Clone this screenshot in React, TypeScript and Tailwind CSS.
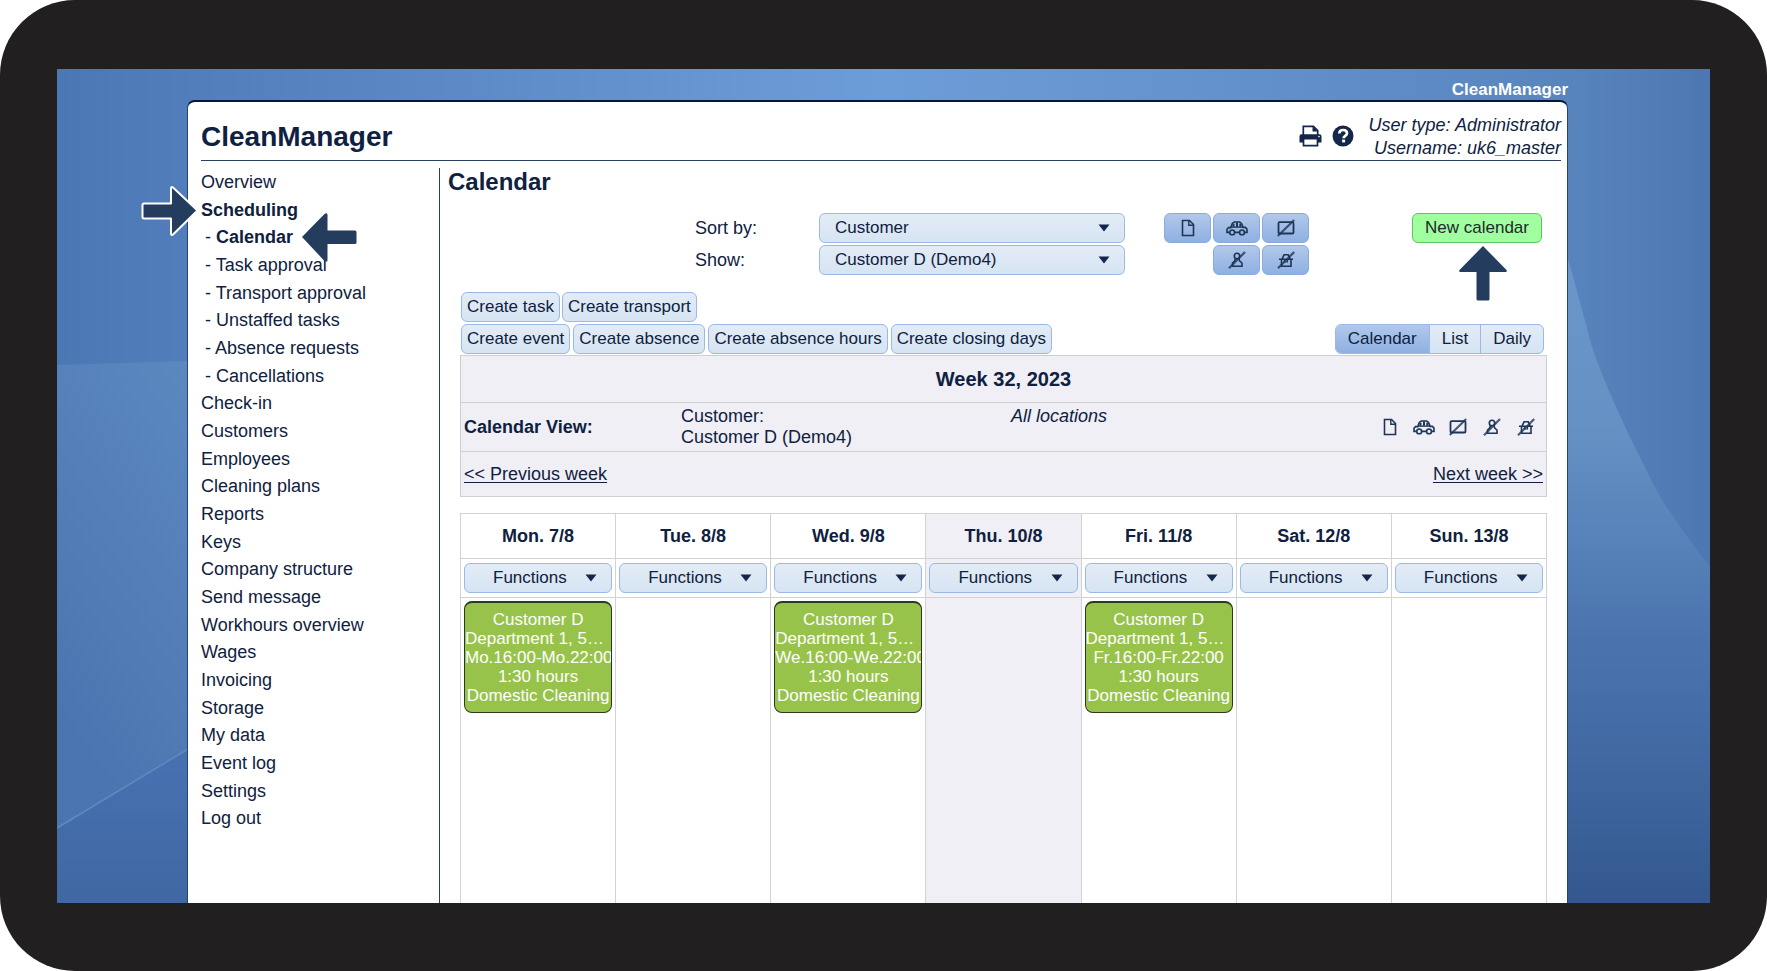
import { ReactNode } from "react";
import clsx from "clsx";

const menu = [
    { label: "Overview" },
    { label: "Scheduling", active: true, arrow: "right" },
    { label: "Calendar", sub: true, active: true, arrow: "left" },
    { label: "Task approval", sub: true },
    { label: "Transport approval", sub: true },
    { label: "Unstaffed tasks", sub: true },
    { label: "Absence requests", sub: true },
    { label: "Cancellations", sub: true },
    { label: "Check-in" },
    { label: "Customers" },
    { label: "Employees" },
    { label: "Cleaning plans" },
    { label: "Reports" },
    { label: "Keys" },
    { label: "Company structure" },
    { label: "Send message" },
    { label: "Workhours overview" },
    { label: "Wages" },
    { label: "Invoicing" },
    { label: "Storage" },
    { label: "My data" },
    { label: "Event log" },
    { label: "Settings" },
    { label: "Log out" },
];

const days = [
    { name: "Mon. 7/8", time: "Mo.16:00-Mo.22:00" },
    { name: "Tue. 8/8" },
    { name: "Wed. 9/8", time: "We.16:00-We.22:00" },
    { name: "Thu. 10/8", today: true },
    { name: "Fri. 11/8", time: "Fr.16:00-Fr.22:00" },
    { name: "Sat. 12/8" },
    { name: "Sun. 13/8" },
];

/* ---------- icons ---------- */

function Icon({ children }: { children: ReactNode }) {
    return (
        <svg viewBox="0 0 22 22" className="w-[22px] h-[22px] shrink-0" fill="none" stroke="#1f3557" strokeWidth="1.6" aria-hidden="true">
            {children}
        </svg>
    )
}

const PageIcon = () => (
    <Icon>
        <path d="M5.5 3.5h7l4 4v11h-11z" />
        <path d="M11.8 3.5v4.7h4.7" strokeWidth="1.4" />
    </Icon>
)

const CarIcon = () => (
    <Icon>
        <path d="M3.6 15.4H1v-3l1.5-1.8h2.2l1.6-4.2 2-1.4h5.4l1.8 1.4 1.7 4h2.2l1.6 1.7v3.300h-2.500M8.700 15.400h4.800" />
        <path d="M5 10.100h12" strokeWidth="1.4" />
        <path d="M7.500 6.800v3M11 5.500v4.300M14.300 6.800v3" strokeWidth="2" />
        <circle cx="6.2" cy="15.4" r="2.4" />
        <circle cx="16" cy="15.4" r="2.4" />
    </Icon>
)

const NoTaskIcon = () => (
    <Icon>
        <rect x="3.5" y="5.200" width="15" height="11.300" rx="1" strokeWidth="1.8" />
        <path d="M2.800 19 19.200 3" strokeWidth="2.2" strokeOpacity="0.8" />
    </Icon>
)

const NoPersonIcon = () => (
    <Icon>
        <circle cx="11" cy="7" r="2.700" />
        <path d="M9.500 9.600 8.600 12 6.500 14v3.200h9.500V14l-2.300-2-0.800-2.400" />
        <path d="M3 19.200 19 3" strokeWidth="2.200" strokeOpacity="0.8" />
    </Icon>
)

const NoPlaceIcon = () => (
    <Icon>
        <path d="M4 10.200h14M6.500 10.200v7h9.500v-7M7.200 9.800l1.800-4h4.200l1.900 4" />
        <path d="M9.500 10.500v2.500h3v-2.500" strokeWidth="1.2" />
        <path d="M3 19.200 19.200 3" strokeWidth="2.2" strokeOpacity="0.8" />
    </Icon>
)

const PrintIcon = () => (
    <svg viewBox="0 0 23 22" className="w-[23px] h-[22px]" fill="none" aria-hidden="true">
        <path d="M4.3 10V1.400h10.200l4.200 4.200V10" stroke="#14274a" strokeWidth="1.7" />
        <path d="M13.500 1v5.600h5.500z" fill="#14274a" />
        <path d="M2.5 9.3h18a2 2 0 0 1 2 2V17.500h-4v-3h-14v3h-4V11.300a2 2 0 0 1 2-2z" fill="#14274a" />
        <circle cx="20" cy="11.6" r="0.8" fill="#fff" />
        <path d="M4.500 14v6.600h14V14" stroke="#14274a" strokeWidth="1.7" />
    </svg>
)

const HelpIcon = () => (
    <svg viewBox="0 0 22 22" className="w-[22px] h-[22px]" fill="none" aria-hidden="true">
        <circle cx="11" cy="11" r="10.5" fill="#14274a" />
        <path d="M7.300 8.500c0-2.300 1.600-3.500 3.800-3.500s3.900 1.200 3.900 3.200c0 2.600-3.400 2.700-3.400 5" stroke="#fff" strokeWidth="2.7" />
        <path d="M10.100 14.600h3v2.800h-3z" fill="#fff" />
    </svg>
)

/* thick pointer arrows used by the guide */
function GuideArrow({ dir }: { dir: string }) {
    if (dir === "right")
        return (
            <svg viewBox="0 0 58 52" className="absolute z-10 -left-[60px] -top-[11px] w-[58px] h-[52px]" aria-hidden="true">
                <path d="M3 18.500h27V4q0-3 2-1.500L56.500 25.500 32 49.500q-2 1.500-2-1.500V33.500H3q-1.500 0-1.500-1.500V20q0-1.500 1.500-1.500z" fill="#243d5f" stroke="#fff" strokeWidth="2" strokeLinejoin="round" />
            </svg>
        )
    if (dir === "left")
        return (
            <svg viewBox="0 0 55 52" className="absolute z-10 left-[101px] -top-[12px] w-[55px] h-[52px]" aria-hidden="true">
                <path d="M0 26 22.500 3q3-2 3 1v15.500H53q1.500 0 1.500 1.500v10.500q0 1.500-1.500 1.500H25.500V49q0 3-3 1z" fill="#243d5f" />
            </svg>
        )
    return (
        <svg viewBox="0 0 48 55" className="absolute z-10 right-[40px] top-[33px] w-[48px] h-[55px]" aria-hidden="true">
            <path d="M24 0 47.500 24q1 2-1 2H30.500v27q0 1.500-1.500 1.500H19q-1.500 0-1.500-1.500V26h-16q-2 0-1-2z" fill="#243d5f" />
        </svg>
    )
}

/* ---------- controls ---------- */

function Select({ id, options, className, label }: { id: string, options: string[], className: string, label?: string }) {
    return (
        <div className="relative w-full">
            <select
                id={id}
                aria-label={label}
                className={clsx("block w-full h-[30px] appearance-none rounded-md border border-[#9bb9e6] bg-linear-to-b from-[#e3ecf6] to-[#d6e4f3] text-[17px] leading-5", className)}
            >
                {options.map((o) => <option key={o}>{o}</option>)}
            </select>
            <svg viewBox="0 0 12 8" className="absolute right-[15px] top-[11px] w-[12px] h-[8px] pointer-events-none" aria-hidden="true">
                <path d="M0.500 0.500h11L6 7.500z" fill="#14274a" />
            </svg>
        </div>
    )
}

function Button({ children }: { children: ReactNode }) {
    return (
        <button className="h-[30px] px-[5px] rounded-md border border-[#9bb9e6] bg-linear-to-b from-[#e3ecf6] to-[#d6e4f3] text-[17px] leading-5 whitespace-nowrap">
            {children}
        </button>
    )
}

function IconButton({ label, children, className }: { label: string, children: ReactNode, className?: string }) {
    return (
        <button
            aria-label={label}
            className={clsx("h-[30px] flex items-center justify-center rounded-md border border-[#8aabe0] bg-linear-to-b from-[#b1c8ea] to-[#8fb0e2]", className)}
        >
            {children}
        </button>
    )
}

function EventCard({ time }: { time: string }) {
    return (
        <div className="rounded-lg border border-t-2 border-[#2b3a1c] bg-[#97c34a] pt-[7px] pb-[7px] text-[17px] leading-[19px] text-white text-center whitespace-nowrap overflow-hidden">
            <p>Customer D</p>
            <p className="text-left">Department 1, 5…</p>
            <p>{time}</p>
            <p>1:30 hours</p>
            <p>Domestic Cleaning</p>
        </div>
    )
}

/* ---------- page parts ---------- */

function Backdrop() {
    return (
        <svg viewBox="0 0 1653 834" preserveAspectRatio="none" className="absolute inset-0 w-full h-full" aria-hidden="true">
            <defs>
                <linearGradient id="sky">
                    <stop offset="0" stopColor="#4c77b5" />
                    <stop offset="0.2" stopColor="#5a87c3" />
                    <stop offset="0.5" stopColor="#6d9dd8" />
                    <stop offset="0.9" stopColor="#5a86c0" />
                    <stop offset="1" stopColor="#4d77b0" />
                </linearGradient>
                <linearGradient id="facet" x1="1" y1="0" x2="0.6" y2="1">
                    <stop offset="0" stopColor="#5c88c0" />
                    <stop offset="1" stopColor="#4b75b0" />
                </linearGradient>
                <linearGradient id="floor" x1="0" y1="0" x2="0" y2="1">
                    <stop offset="0" stopColor="#4771b1" />
                    <stop offset="1" stopColor="#3f68a3" />
                </linearGradient>
                <linearGradient id="wave" x1="0" y1="0" x2="0" y2="1">
                    <stop offset="0" stopColor="#6c97c9" />
                    <stop offset="0.3" stopColor="#6490c4" />
                    <stop offset="0.6" stopColor="#4b74ae" />
                    <stop offset="0.8" stopColor="#4067a0" />
                    <stop offset="1" stopColor="#33588f" />
                </linearGradient>
            </defs>
            <rect width="1653" height="834" fill="url(#sky)" />
            <path d="M0 296 131 292V680L0 759z" fill="url(#facet)" />
            <path d="M0 759 131 680V834H0z" fill="url(#floor)" />
            <path d="M0 759 131 680" stroke="#5f8abf" strokeWidth="1.5" />
            <path d="M1505 170Q1520 220 1534 275 1552 330 1603 428 1625 462 1653 498V834H1505z" fill="url(#wave)" />
        </svg>
    )
}

function Sidebar() {
    return (
        <nav className="w-[239px] shrink-0 mt-[7px] border-r border-[#2c3f60]">
            <ul className="grid auto-rows-fr h-[664px] text-lg leading-7">
                {menu.map((item) => (
                    <li key={item.label} className={clsx("relative", item.sub && "pl-1", item.active && "font-bold")}>
                        {item.sub && <span className="font-normal">- </span>}
                        <a href="#">{item.label}</a>
                        {item.arrow && <GuideArrow dir={item.arrow} />}
                    </li>
                ))}
            </ul>
        </nav>
    )
}

function Filters() {
    return (
        <div className="relative flex items-start mt-[17px] pl-[235px] pr-[5px]">
            <div className="grid grid-cols-[124px_306px] gap-y-[2px] items-center text-lg leading-[30px]">
                <label htmlFor="sort">Sort by:</label>
                <Select id="sort" options={["Customer"]} className="px-[15px]" />
                <label htmlFor="show">Show:</label>
                <Select id="show" options={["Customer D (Demo4)"]} className="px-[15px]" />
            </div>
            <div className="grid grid-cols-[47px_47px_47px] gap-[2px] ml-[39px]">
                <IconButton label="Tasks"><PageIcon /></IconButton>
                <IconButton label="Transport"><CarIcon /></IconButton>
                <IconButton label="Hide absence"><NoTaskIcon /></IconButton>
                <IconButton label="Hide employees" className="col-start-2"><NoPersonIcon /></IconButton>
                <IconButton label="Hide closing days"><NoPlaceIcon /></IconButton>
            </div>
            <button className="ml-auto h-[30px] px-3 rounded-md border border-[#5fc45f] bg-[#a0ff9f] text-[17px] leading-5 text-[#22282c]">
                New calendar
            </button>
            <GuideArrow dir="up" />
        </div>
    )
}

function Actions() {
    return (
        <div className="mt-[17px] pl-px">
            <div className="flex gap-[2px]">
                <Button>Create task</Button>
                <Button>Create transport</Button>
            </div>
            <div className="flex justify-between mt-[2px] pr-[3px]">
                <div className="flex gap-[3px]">
                    <Button>Create event</Button>
                    <Button>Create absence</Button>
                    <Button>Create absence hours</Button>
                    <Button>Create closing days</Button>
                </div>
                <div className="flex h-[30px] rounded-md border border-[#9bb9e6] bg-linear-to-b from-[#e3ecf6] to-[#d6e4f3] text-[17px] leading-5 overflow-hidden">
                    <button className="px-3 bg-linear-to-b from-[#b1c8ea] to-[#8fb0e2]">Calendar</button>
                    <button className="px-3 border-l border-[#9bb9e6]">List</button>
                    <button className="px-3 border-l border-[#9bb9e6]">Daily</button>
                </div>
            </div>
        </div>
    )
}

function WeekInfo() {
    return (
        <section className="mt-px border border-[#cfcfd2] bg-[#f0eff6] text-lg leading-[21px]">
            <h3 className="h-[46px] flex items-center justify-center text-xl font-bold">Week 32, 2023</h3>
            <div className="grid grid-cols-[217px_330px_1fr] h-[50px] px-[3px] items-center border-y border-[#cfcfd2]">
                <p className="font-bold">Calendar View:</p>
                <p>Customer:<br />Customer D (Demo4)</p>
                <div className="flex justify-between items-center h-[42px]">
                    <p className="self-start italic">All locations</p>
                    <div className="flex gap-3 pr-[6px]">
                        <PageIcon />
                        <CarIcon />
                        <NoTaskIcon />
                        <NoPersonIcon />
                        <NoPlaceIcon />
                    </div>
                </div>
            </div>
            <div className="flex justify-between items-center h-[44px] px-[3px]">
                <a href="#" className="underline underline-offset-2">&lt;&lt; Previous week</a>
                <a href="#" className="underline underline-offset-2">Next week &gt;&gt;</a>
            </div>
        </section>
    )
}

function WeekTable() {
    return (
        <table className="w-full table-fixed border-collapse mt-4 text-lg">
            <thead>
                <tr className="h-[45px]">
                    {days.map((d) => (
                        <th key={d.name} className={clsx("border border-[#d2d2d4] font-bold", d.today && "bg-[#f0eff6]")}>{d.name}</th>
                    ))}
                </tr>
            </thead>
            <tbody>
                <tr className="h-[39px]">
                    {days.map((d) => (
                        <td key={d.name} className={clsx("border border-[#d2d2d4] px-[3px]", d.today && "bg-[#f0eff6]")}>
                            <Select id={"fn-" + d.name} label={"Functions " + d.name} options={["Functions"]} className="pl-7" />
                        </td>
                    ))}
                </tr>
                <tr className="h-[330px] align-top">
                    {days.map((d) => (
                        <td key={d.name} className={clsx("border border-[#d2d2d4] px-[3px] pt-[3px]", d.today && "bg-[#f0eff6]")}>
                            {d.time && <EventCard time={d.time} />}
                        </td>
                    ))}
                </tr>
            </tbody>
        </table>
    )
}

export default function App() {
    return (
        <div className="h-screen flex bg-white font-['Liberation_Sans',Arial,sans-serif] text-[#0f2140]">
            <div className="flex-1 flex rounded-[75px] bg-[#221f20] px-[57px] pt-[69px] pb-[68px]">
                <div className="relative flex-1 min-w-0 overflow-hidden">
                    <Backdrop />
                    <div className="relative h-full flex flex-col ml-[130px] mr-[142px]">
                        <p className="pt-[10px] text-right text-[17px] leading-[21px] font-bold text-white">CleanManager</p>
                        <div className="flex-1 flex flex-col min-h-0 bg-white rounded-t-lg border-x border-t-2 border-x-[#23457a] border-t-[#06183a] pl-[13px] pr-[6px]">
                            <header className="flex items-end h-[59px] shrink-0 border-b border-[#2c3f60]">
                                <h1 className="text-[28px] leading-8 font-bold pb-[7px]">CleanManager</h1>
                                <div className="ml-auto flex gap-[10px] pb-[13px] pr-[15px]">
                                    <button aria-label="Print"><PrintIcon /></button>
                                    <button aria-label="Help"><HelpIcon /></button>
                                </div>
                                <p className="text-right text-lg leading-[23px] italic">
                                    User type: Administrator<br />
                                    Username: uk6_master
                                </p>
                            </header>
                            <div className="flex-1 flex min-h-0">
                                <Sidebar />
                                <main className="flex-1 min-w-0 pt-[7px] pl-2 pr-[14px]">
                                    <h2 className="text-2xl leading-7 font-bold">Calendar</h2>
                                    <div className="pl-3">
                                        <Filters />
                                        <Actions />
                                        <WeekInfo />
                                        <WeekTable />
                                    </div>
                                </main>
                            </div>
                        </div>
                    </div>
                </div>
            </div>
        </div>
    )
}
